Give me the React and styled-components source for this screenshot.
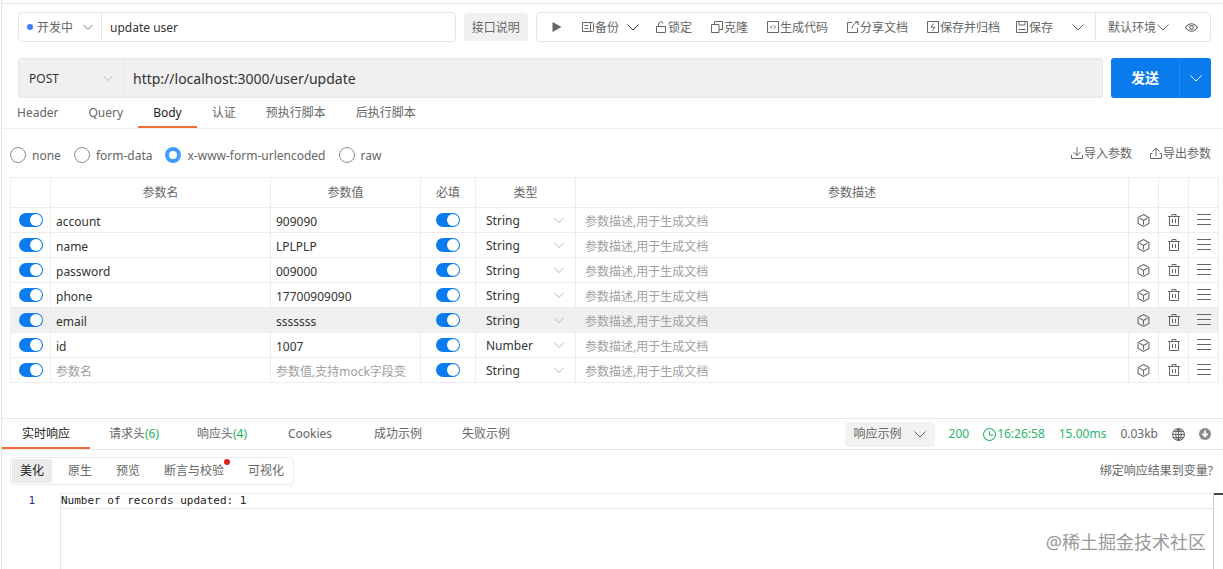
import React, { useState } from 'react'
import styled, { createGlobalStyle, css } from 'styled-components'

const initialRows = [
    { name: 'account', value: '909090', type: 'String' },
    { name: 'name', value: 'LPLPLP', type: 'String' },
    { name: 'password', value: '009000', type: 'String' },
    { name: 'phone', value: '17700909090', type: 'String' },
    { name: 'email', value: 'sssssss', type: 'String', active: true },
    { name: 'id', value: '1007', type: 'Number' },
    { name: '', value: '', type: 'String' },
]

const requestTabs = ['Header', 'Query', 'Body', '认证', '预执行脚本', '后执行脚本']
const bodyTypes = ['none', 'form-data', 'x-www-form-urlencoded', 'raw']
const viewModes = ['美化', '原生', '预览', '断言与校验', '可视化']
const responseTabs = [
    { label: '实时响应' },
    { label: '请求头', count: 6 },
    { label: '响应头', count: 4 },
    { label: 'Cookies' },
    { label: '成功示例' },
    { label: '失败示例' },
]

const icons = {
    play: <path d="M1.500 1v10l9-5z" fill="currentColor" stroke="none" />,
    backup: <path d="M.5 1.500h8v9h-8zM2.500 4.500h4M2.500 7.500h4M8.500 1.500h2q1 0 1 1v7q0 1-1 1h-2" />,
    lock: <path d="M1.500 5.500h9v6h-9zM3.500 5.500v-2.500a2.300 2.300 0 0 1 4.500-.6" />,
    clone: <path d="M.5 3.500h7.500v8h-7.500zM3.500 3.500v-3h8v8h-3.500" />,
    code: <path d="M.5.5h11v11h-11zM5 4.500L3.500 6 5 7.500M7 4.500L8.500 6 7 7.500" />,
    share: <path d="M5 1.500H.5v10h10V7M8 .8h3.200V4M11 1C7.500 2 5.500 4 5 7.500" />,
    archive: <path d="M.5.5h11v11h-11zM6.500 2.500L4 6.200h4L5.500 9.500" />,
    save: <path d="M.5.5h11v11h-11zM3 .5v3.500h6V.5M2.500 8.500h7" />,
    down: <path d="M.5 3.500L6 9l5.500-5.500" />,
    eye: <path d="M.5 6Q3 2.500 6 2.500T11.500 6Q9 9.500 6 9.500T.5 6zM6 4.300a1.700 1.700 0 1 0 0 3.400 1.700 1.700 0 0 0 0-3.400z" />,
    importIcon: <path d="M6 0v8.500M2.500 5L6 8.500 9.500 5M.5 8v3.500h11V8" />,
    exportIcon: <path d="M6 9V1M2.500 4.500L6 1l3.500 3.500M2.500 6.500h-2v5h11v-5h-2" />,
    box: <path d="M6 .5l5 2.700v5.600l-5 2.700-5-2.700V3.200zM2.500 4L6 6l3.500-2M6 6v4" />,
    trash: <path d="M0 2.500h12M4 2.500v-2h4v2M1.500 2.500v9h9v-9M4.500 5v4M7.500 5v4" />,
    menu: <path d="M-1 .5h14M-1 5.500h14M-1 10.500h14" />,
    clock: <path d="M6 .5a5.500 5.500 0 1 0 0 11 5.500 5.500 0 0 0 0-11zM6 3v3.500h3.500" />,
    globe: <path d="M6 .5a5.500 5.500 0 1 0 0 11 5.500 5.500 0 0 0 0-11zM6 .5c-3.500 3-3.500 8 0 11M6 .5c3.500 3 3.500 8 0 11M6 .5v11M.5 6h11M1.300 3.300h9.400M1.300 8.700h9.400" />,
    download: (
        <>
            <circle cx="6" cy="6" r="6" fill="currentColor" stroke="none" />
            <path d="M6 2.500v5M3.300 5.500L6 8.500l2.700-3" stroke="#fff" strokeWidth="1.800" />
        </>
    ),
}

function Icon({ name, size = 12 }) {
    return (
        <IconSvg viewBox="0 0 12 12" $size={size} aria-hidden="true">
            {icons[name]}
        </IconSvg>
    )
}

function ParamRow({ row }) {
    const [name, setName] = useState(row.name)
    const [value, setValue] = useState(row.value)

    return (
        <Row $active={row.active}>
            <Cell $center><Switch type="checkbox" aria-label="启用" defaultChecked /></Cell>
            <Cell>
                <CellInput aria-label="参数名" placeholder="参数名" value={name} onChange={(e) => setName(e.target.value)} />
            </Cell>
            <Cell>
                <CellInput aria-label="参数值" placeholder="参数值,支持mock字段变量" value={value} onChange={(e) => setValue(e.target.value)} />
            </Cell>
            <Cell $center><Switch type="checkbox" aria-label="必填" defaultChecked /></Cell>
            <Cell>
                <TypeSelect>
                    <select aria-label="类型" defaultValue={row.type}>
                        <option>String</option>
                        <option>Number</option>
                    </select>
                    <Icon name="down" size={10} />
                </TypeSelect>
            </Cell>
            <Cell>
                <CellInput $wide aria-label="参数描述" placeholder="参数描述,用于生成文档" />
            </Cell>
            <Cell $center><IconButton aria-label="模型"><Icon name="box" size={13} /></IconButton></Cell>
            <Cell $center><IconButton aria-label="删除"><Icon name="trash" /></IconButton></Cell>
            <Cell $center><IconButton aria-label="排序"><Icon name="menu" /></IconButton></Cell>
        </Row>
    )
}

function App() {
    const [tab, setTab] = useState('Body')
    const [bodyType, setBodyType] = useState('x-www-form-urlencoded')
    const [resTab, setResTab] = useState('实时响应')
    const [mode, setMode] = useState('美化')

    return (
        <>
            <GlobalStyle />
            <Page>
                <TopEdge />
                <Toolbar>
                    <NameGroup>
                        <StatusSelect>
                            <StatusDot />
                            <select aria-label="状态" defaultValue="开发中">
                                <option>开发中</option>
                            </select>
                            <Icon name="down" size={10} />
                        </StatusSelect>
                        <NameInput aria-label="接口名称" defaultValue="update user" />
                    </NameGroup>
                    <NoteButton>接口说明</NoteButton>
                    <Actions>
                        <ActionButton aria-label="运行"><Icon name="play" /></ActionButton>
                        <ActionSet $gap={8}>
                            <ActionButton><Icon name="backup" /><span>备份</span></ActionButton>
                            <ActionButton $dark aria-label="更多备份"><Icon name="down" /></ActionButton>
                            <ActionButton $spaced><Icon name="lock" /><span>锁定</span></ActionButton>
                        </ActionSet>
                        <ActionButton><Icon name="clone" /><span>克隆</span></ActionButton>
                        <ActionButton><Icon name="code" /><span>生成代码</span></ActionButton>
                        <ActionButton><Icon name="share" /><span>分享文档</span></ActionButton>
                        <ActionSet $gap={16}>
                            <ActionButton><Icon name="archive" /><span>保存并归档</span></ActionButton>
                            <ActionButton><Icon name="save" /><span>保存</span></ActionButton>
                        </ActionSet>
                        <ActionButton aria-label="更多保存"><Icon name="down" /></ActionButton>
                        <Environment>
                            <ActionButton><span>默认环境</span><Icon name="down" /></ActionButton>
                            <ActionButton aria-label="查看环境"><Icon name="eye" size={13} /></ActionButton>
                        </Environment>
                    </Actions>
                </Toolbar>

                <RequestLine>
                    <UrlGroup>
                        <MethodSelect>
                            <select aria-label="请求方法" defaultValue="POST">
                                <option>POST</option>
                                <option>GET</option>
                            </select>
                            <Icon name="down" size={10} />
                        </MethodSelect>
                        <UrlInput aria-label="请求地址" defaultValue="http://localhost:3000/user/update" />
                    </UrlGroup>
                    <SendGroup>
                        <SendButton>发送</SendButton>
                        <SendMore aria-label="更多发送方式"><Icon name="down" /></SendMore>
                    </SendGroup>
                </RequestLine>

                <RequestTabs>
                    {requestTabs.map((el) => (
                        <TabButton key={el} $active={tab === el} onClick={() => setTab(el)}>{el}</TabButton>
                    ))}
                </RequestTabs>

                <BodyBar>
                    <RadioGroup>
                        {bodyTypes.map((el) => (
                            <RadioLabel key={el}>
                                <Radio type="radio" name="bodyType" checked={bodyType === el} onChange={() => setBodyType(el)} />
                                <span>{el}</span>
                            </RadioLabel>
                        ))}
                    </RadioGroup>
                    <ParamActions>
                        <ActionButton><Icon name="importIcon" /><span>导入参数</span></ActionButton>
                        <ActionButton><Icon name="exportIcon" /><span>导出参数</span></ActionButton>
                    </ParamActions>
                </BodyBar>

                <TableWrapper>
                    <ParamTable>
                        <colgroup>
                            <Col $width={40} />
                            <Col $width={220} />
                            <Col $width={150} />
                            <Col $width={55} />
                            <Col $width={100} />
                            <col />
                            <Col $width={30} />
                            <Col $width={30} />
                            <Col $width={30} />
                        </colgroup>
                        <thead>
                            <tr>
                                <HeadCell />
                                <HeadCell>参数名</HeadCell>
                                <HeadCell>参数值</HeadCell>
                                <HeadCell>必填</HeadCell>
                                <HeadCell>类型</HeadCell>
                                <HeadCell>参数描述</HeadCell>
                                <HeadCell />
                                <HeadCell />
                                <HeadCell />
                            </tr>
                        </thead>
                        <tbody>
                            {initialRows.map((row, i) => (
                                <ParamRow key={i} row={row} />
                            ))}
                        </tbody>
                    </ParamTable>
                </TableWrapper>

                <ResponseBar>
                    <ResponseTabs>
                        {responseTabs.map(({ label, count }) => (
                            <TabButton key={label} $equal $active={resTab === label} onClick={() => setResTab(label)}>
                                {label}{count && <Count>({count})</Count>}
                            </TabButton>
                        ))}
                    </ResponseTabs>
                    <ResponseInfo>
                        <ExampleButton>响应示例<Icon name="down" /></ExampleButton>
                        <Stat $ok>200</Stat>
                        <Stat $ok><Icon name="clock" size={13} />16:26:58</Stat>
                        <Stat $ok>15.00ms</Stat>
                        <Stat>0.03kb</Stat>
                        <IconButton aria-label="网络信息"><Icon name="globe" size={13} /></IconButton>
                        <IconButton $light aria-label="下载响应"><Icon name="download" /></IconButton>
                    </ResponseInfo>
                </ResponseBar>

                <ViewBar>
                    <ViewModes>
                        {viewModes.map((el) => (
                            <ModeButton key={el} $active={mode === el} onClick={() => setMode(el)}>
                                {el}
                                {el === '断言与校验' && <RedDot />}
                            </ModeButton>
                        ))}
                    </ViewModes>
                    <BindLink href="#bind">绑定响应结果到变量?</BindLink>
                </ViewBar>

                <Editor>
                    <LineNumber>1</LineNumber>
                    <Code><CodeLine>Number of records updated: 1</CodeLine></Code>
                    <Ruler />
                    <Watermark>@稀土掘金技术社区</Watermark>
                </Editor>
            </Page>
        </>
    )
}

export default App

const GlobalStyle = createGlobalStyle`
    *{
        box-sizing: border-box;
    }
    body{
        margin: 0;
        background: #fff;
    }
    body, button, input, select{
        font-family: "Noto Sans", "Noto Sans CJK SC", sans-serif;
        font-size: 12px;
        line-height: 16px;
        color: #666;
    }
    button, input, select{
        margin: 0;
        padding: 0;
        border: 0;
        background: none;
        outline: none;
    }
    button{
        cursor: pointer;
        white-space: nowrap;
    }
    select{
        appearance: none;
    }
`

const IconSvg = styled.svg`
    flex-shrink: 0;
    display: block;
    width: ${({ $size }) => $size}px;
    height: ${({ $size }) => $size}px;
    fill: none;
    stroke: currentColor;
    overflow: visible;
`

const Page = styled.div`
    display: flex;
    flex-direction: column;
    min-height: 100vh;
    margin-left: 1px;
    border-left: 1px solid #e6e6e6;
    overflow: hidden;
`

const TopEdge = styled.div`
    height: 4px;
    border-bottom: 1px solid #e9e9e9;
`

const Toolbar = styled.div`
    display: flex;
    gap: 8px;
    padding: 8px 12px 0 16px;
`

const NameGroup = styled.div`
    flex: 1;
    min-width: 0;
    display: flex;
    height: 30px;
    border: 1px solid #e6e6e6;
    border-radius: 4px;
`

const StatusSelect = styled.div`
    display: flex;
    align-items: center;
    gap: 4px;
    padding: 0 8px;
    border-right: 1px solid #e6e6e6;
    select{
        width: 42px;
        padding-top: 2px;
    }
`

const StatusDot = styled.span`
    width: 6px;
    height: 6px;
    border-radius: 50%;
    background: #3d7eff;
`

const NameInput = styled.input`
    flex: 1;
    min-width: 0;
    padding: 2px 8px 0;
    color: #333;
`

const NoteButton = styled.button`
    height: 28px;
    margin-top: 1px;
    padding: 2px 8px 0;
    border-radius: 4px;
    background: #f0f0f0;
`

const Actions = styled.div`
    display: flex;
    align-items: center;
    gap: 19px;
    height: 30px;
    padding-left: 14px;
    border: 1px solid #e6e6e6;
    border-radius: 4px;
`

const ActionSet = styled.div`
    display: flex;
    gap: ${({ $gap }) => $gap}px;
`

const ActionButton = styled.button`
    display: flex;
    align-items: center;
    gap: 1px;
    margin-left: ${({ $spaced }) => ($spaced ? '8px' : 0)};
    color: ${({ $dark }) => ($dark ? '#333' : '#666')};
    span{
        padding-top: 2px;
    }
`

const Environment = styled.div`
    display: flex;
    align-items: center;
    align-self: stretch;
    gap: 16px;
    margin-left: -8px;
    padding: 0 12px;
    border-left: 1px solid #e6e6e6;
`

const RequestLine = styled.div`
    display: flex;
    gap: 8px;
    padding: 16px 12px 0 16px;
`

const UrlGroup = styled.div`
    flex: 1;
    display: flex;
    height: 40px;
    border: 1px solid #e6e6e6;
    border-radius: 3px;
    background: #f0f0f0;
`

const MethodSelect = styled.div`
    display: flex;
    align-items: center;
    width: 106px;
    padding: 0 11px 0 10px;
    border-right: 1px solid #e6e6e6;
    color: #aaa;
    select{
        flex: 1;
        padding-top: 2px;
        color: #333;
    }
`

const UrlInput = styled.input`
    flex: 1;
    padding: 2px 8px 0;
    font-size: 14px;
    color: #333;
`

const SendGroup = styled.div`
    display: flex;
    border-radius: 3px;
    background: #097bed;
    overflow: hidden;
`

const SendButton = styled.button`
    width: 68px;
    font-size: 14px;
    font-weight: 700;
    color: #fff;
`

const SendMore = styled.button`
    display: flex;
    align-items: center;
    justify-content: center;
    width: 32px;
    border-left: 1px solid #2388ef;
    color: #fff;
`

const RequestTabs = styled.div`
    display: flex;
    height: 31px;
    border-bottom: 1px solid #ededed;
`

const TabButton = styled.button`
    position: relative;
    padding: 0 15px;
    ${({ $equal }) => $equal && css`
        width: 88px;
        padding: 0;
    `}
    ${({ $active }) => $active && css`
        color: #222;
        &::after{
            content: "";
            position: absolute;
            left: 0;
            right: 0;
            bottom: 0;
            height: 2px;
            background: #ee6c37;
        }
    `}
`

const BodyBar = styled.div`
    display: flex;
    align-items: center;
    justify-content: space-between;
    height: 48px;
    padding: 4px 12px 0 8px;
`

const RadioGroup = styled.div`
    display: flex;
    gap: 13px;
`

const RadioLabel = styled.label`
    display: flex;
    align-items: center;
    gap: 6px;
    span{
        padding-top: 2px;
    }
`

const Radio = styled.input`
    appearance: none;
    width: 16px;
    height: 16px;
    border: 1px solid #8c8c8c;
    border-radius: 50%;
    background: #fff;
    &:checked{
        border: 4px solid #409eff;
    }
`

const ParamActions = styled.div`
    display: flex;
    gap: 18px;
    padding-bottom: 4px;
`

const TableWrapper = styled.div`
    padding: 0 4px 35px 8px;
`

const ParamTable = styled.table`
    width: 100%;
    table-layout: fixed;
    border-collapse: collapse;
`

const Col = styled.col`
    width: ${({ $width }) => $width}px;
`

const HeadCell = styled.th`
    height: 30px;
    padding: 0;
    border: 1px solid #ececec;
    font-weight: 400;
`

const Cell = styled.td`
    height: 25px;
    padding: 0;
    border: 1px solid #ececec;
    color: #666;
    ${({ $center }) => $center && css`
        & > *{
            margin: 0 auto;
        }
    `}
`

const Row = styled.tr`
    ${({ $active }) => $active && css`
        background: #f0f0f0;
        td{
            border-color: #f0f0f0;
        }
    `}
`

const CellInput = styled.input`
    display: block;
    width: 100%;
    padding: ${({ $wide }) => ($wide ? '4px 9px 0' : '4px 13px 0 5px')};
    color: #333;
    &::placeholder{
        color: #a0a0a0;
    }
`

const Switch = styled.input`
    appearance: none;
    display: block;
    width: 24px;
    height: 14px;
    padding: 1px;
    border-radius: 7px;
    background: #bbb;
    &::before{
        content: "";
        display: block;
        width: 12px;
        height: 12px;
        border-radius: 50%;
        background: #fff;
    }
    &:checked{
        background: #0a7cf0;
    }
    &:checked::before{
        margin-left: auto;
    }
`

const TypeSelect = styled.div`
    display: flex;
    align-items: center;
    padding: 0 11px 0 10px;
    color: #aaa;
    select{
        flex: 1;
        padding-top: 2px;
        color: #333;
    }
`

const IconButton = styled.button`
    display: block;
    color: ${({ $light }) => ($light ? '#888' : '#666')};
`

const ResponseBar = styled.div`
    display: flex;
    justify-content: space-between;
    height: 32px;
    border-top: 1px solid #e8e8e8;
    border-bottom: 1px solid #e8e8e8;
`

const ResponseTabs = styled.div`
    display: flex;
`

const Count = styled.span`
    color: #1fb45c;
`

const ResponseInfo = styled.div`
    display: flex;
    align-items: center;
    gap: 14px;
    padding-right: 12px;
`

const ExampleButton = styled.button`
    display: flex;
    align-items: center;
    gap: 12px;
    height: 25px;
    padding: 0 9px;
    border-radius: 4px;
    background: #f2f2f2;
`

const Stat = styled.span`
    display: flex;
    align-items: center;
    gap: 1px;
    color: ${({ $ok }) => ($ok ? '#27b567' : '#666')};
`

const ViewBar = styled.div`
    display: flex;
    align-items: center;
    justify-content: space-between;
    padding: 7px 10px 8px 8px;
`

const ViewModes = styled.div`
    display: flex;
    gap: 8px;
    padding: 1px;
    border: 1px solid #ebebeb;
    border-radius: 4px;
`

const ModeButton = styled.button`
    position: relative;
    height: 24px;
    padding: 0 8px;
    border-radius: 2px;
    ${({ $active }) => $active && css`
        background: #ebebeb;
        color: #222;
    `}
`

const RedDot = styled.span`
    position: absolute;
    top: 0;
    right: 2px;
    width: 6px;
    height: 6px;
    border-radius: 50%;
    background: #e02020;
`

const BindLink = styled.a`
    color: #666;
    text-decoration: none;
`

const Editor = styled.div`
    position: relative;
    flex: 1;
    display: flex;
    font-family: "DejaVu Sans Mono", monospace;
    font-size: 11px;
`

const LineNumber = styled.div`
    width: 58px;
    padding-right: 25px;
    text-align: right;
    color: #2b2b90;
`

const Code = styled.div`
    flex: 1;
    border-left: 1px solid #e6e6e6;
    color: #222;
`

const CodeLine = styled.div`
    border-top: 1px solid #ebebeb;
    border-bottom: 1px solid #ebebeb;
    line-height: 14px;
`

const Ruler = styled.div`
    width: 10px;
    border-left: 1px solid #cfcfcf;
    &::before{
        content: "";
        display: block;
        height: 2px;
        background: #444;
    }
`

const Watermark = styled.div`
    position: absolute;
    right: 17px;
    bottom: 15px;
    font-family: "Noto Sans", "Noto Sans CJK SC", sans-serif;
    font-size: 18px;
    line-height: 24px;
    color: #999;
`
